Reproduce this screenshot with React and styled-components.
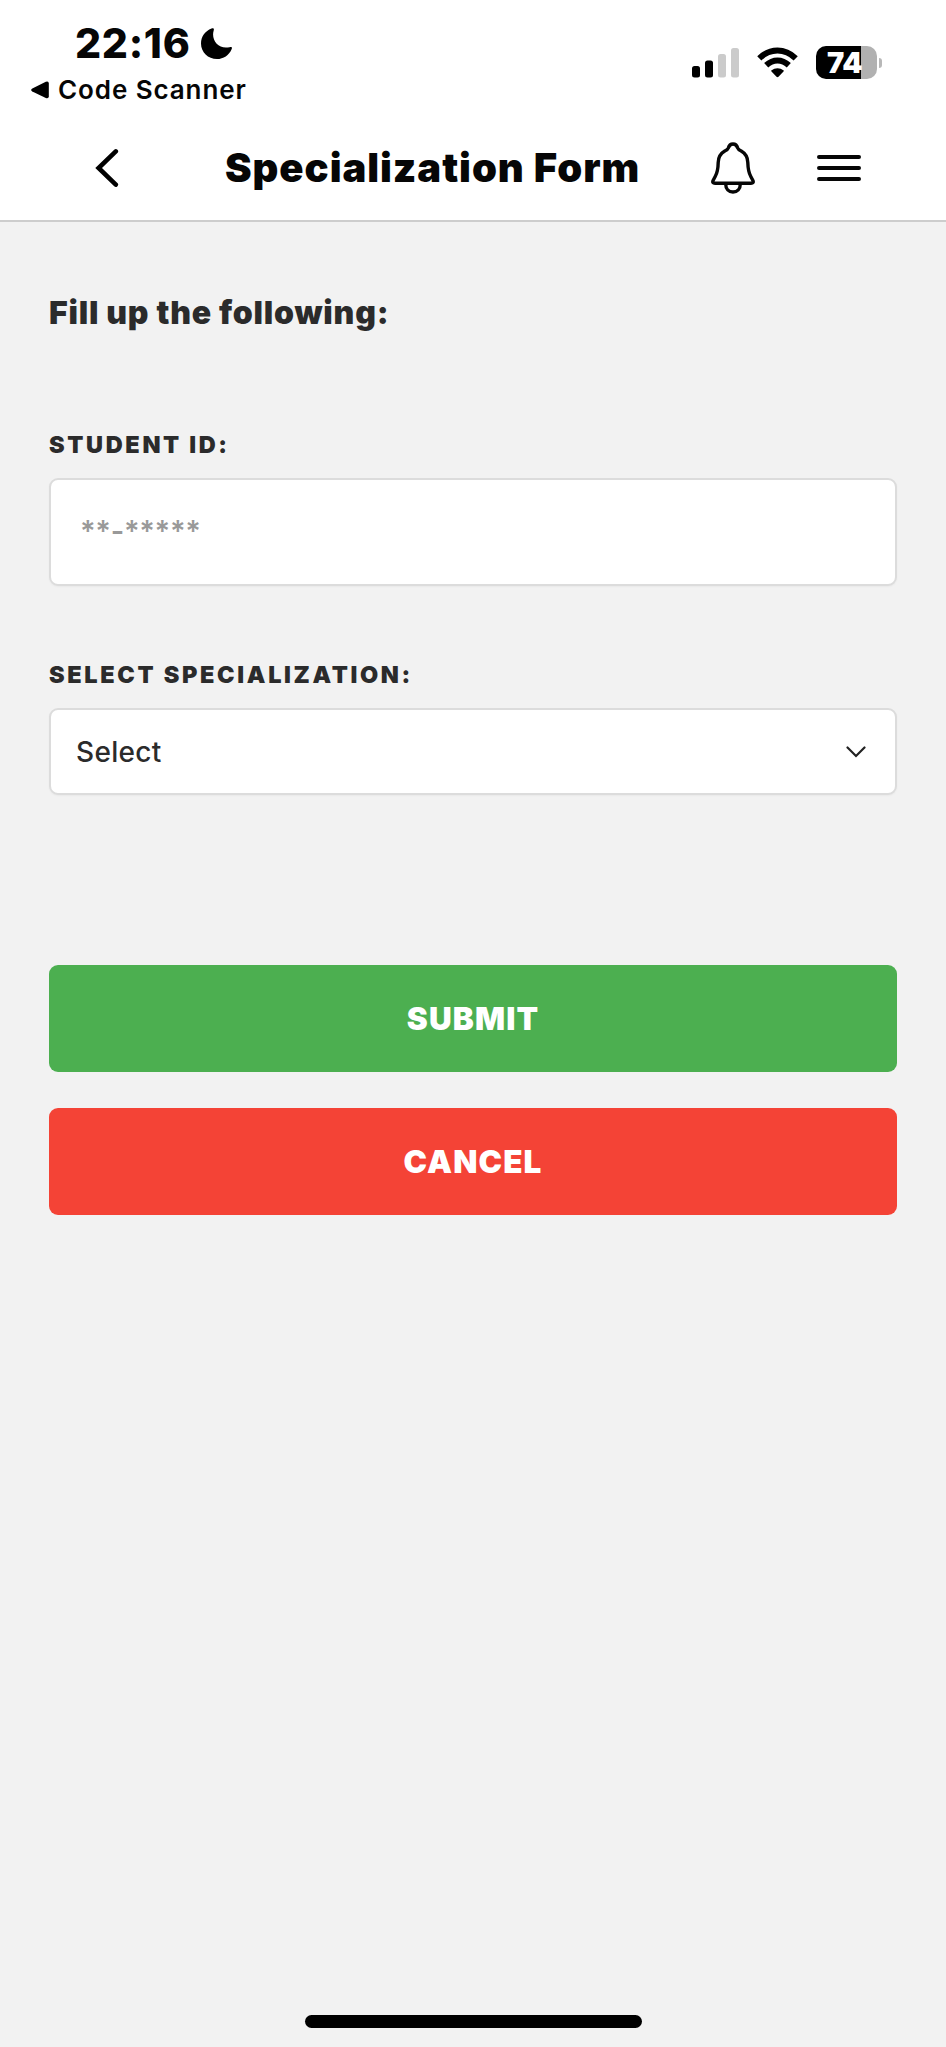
import React from "react";
import styled, { createGlobalStyle } from "styled-components";

const GlobalStyle = createGlobalStyle`
  * { box-sizing: border-box; }
  html, body { margin: 0; padding: 0; background: #f2f2f2; }
  body { font-family: Inter, "Liberation Sans", sans-serif; color: #2b2b2b; }
  svg { display: block; flex: none; }
`;

const Screen = styled.div`
  display: flex;
  flex-direction: column;
  width: 946px;
  height: 2047px;
  background: #f2f2f2;
  overflow: hidden;
`;

const Header = styled.header`
  height: 222px;
  background: #fff;
  border-bottom: 2px solid #cdcdcd;
  color: #060606;
`;

const StatusBar = styled.div`
  display: flex;
  justify-content: space-between;
  height: 117px;
  padding: 18px 64px 0 31px;
`;

const StatusLeft = styled.div`
  display: flex;
  flex-direction: column;
`;

const ClockRow = styled.div`
  display: flex;
  align-items: center;
  height: 51px;
  padding-left: 44px;
`;

const Clock = styled.span`
  width: 126px;
  font-size: 41px;
  font-weight: 800;
  line-height: 51px;
  letter-spacing: 0.7px;
  white-space: nowrap;
`;

const BackToApp = styled.div`
  display: flex;
  align-items: center;
  gap: 8px;
  height: 42px;
  font-size: 26px;
  font-weight: 600;
  line-height: 42px;
  letter-spacing: 0.9px;
  white-space: nowrap;
`;

const StatusRight = styled.div`
  display: flex;
  padding-top: 28px;
  gap: 17px;
`;

const Battery = styled.div`
  display: flex;
  align-items: center;
  gap: 2px;
  height: 33px;
  margin-left: 1px;
`;

const BatteryBody = styled.div`
  width: 61px;
  height: 33px;
  border-radius: 10px;
  background: linear-gradient(to right, #000 45px, #b1b1b1 45px);
  color: #fff;
  font-size: 29px;
  font-weight: 900;
  line-height: 34px;
  letter-spacing: -0.3px;
  text-align: left;
  padding-left: 11px;
`;

const BatteryTip = styled.div`
  width: 3px;
  height: 10px;
  border-radius: 0 3px 3px 0;
  background: #b8b8b8;
`;

const NavBar = styled.nav`
  display: flex;
  align-items: center;
  height: 101px;
  padding-left: 95px;
`;

const Title = styled.h1`
  width: 433px;
  margin: 0 0 0 106px;
  font-size: 40px;
  font-weight: 900;
  line-height: 50px;
  letter-spacing: 0.95px;
  white-space: nowrap;
`;

const NavIcons = styled.div`
  display: flex;
  align-items: center;
  margin-left: 53px;
  gap: 62px;
`;

const Form = styled.main`
  display: flex;
  flex-direction: column;
  flex: 1;
  padding: 71px 49px 0;
`;

const Heading = styled.h2`
  margin: 0 0 97px;
  font-size: 32px;
  font-weight: 900;
  line-height: 40px;
  letter-spacing: 0.77px;
`;

const Label = styled.label`
  font-size: 23.5px;
  font-weight: 900;
  line-height: 30px;
  letter-spacing: 2.65px;
  margin-bottom: 18px;
`;

const inputBox = `
  background: #fff;
  border: 2px solid #dcdcdc;
  border-radius: 9px;
  box-shadow: 0 1px 2px rgba(0, 0, 0, 0.04);
`;

const Input = styled.div`
  ${inputBox}
  height: 108px;
  margin-bottom: 74px;
  padding: 31px 0 0 29px;
  color: #999;
  font-size: 29px;
  font-weight: 600;
  line-height: 40px;
  letter-spacing: -0.3px;
`;

const Select = styled.div`
  ${inputBox}
  display: flex;
  align-items: center;
  justify-content: space-between;
  height: 87px;
  margin-bottom: 170px;
  padding: 0 29px 0 25px;
  font-size: 28px;
  font-weight: 500;
  letter-spacing: 0.3px;
`;

const Button = styled.button`
  height: 107px;
  margin: 0 0 36px;
  padding: 0;
  border: 0;
  border-radius: 9px;
  background: ${(p) => p.$color};
  color: #fff;
  font-family: inherit;
  font-size: 31.5px;
  font-weight: 900;
  line-height: 40px;
  letter-spacing: 1.1px;
`;

const HomeIndicator = styled.div`
  align-self: center;
  width: 337px;
  height: 13px;
  margin-bottom: 19px;
  border-radius: 7px;
  background: #000;
`;

const Moon = () => (
  <svg width="31" height="31" viewBox="0 0 31 31">
    <path d="M10.5 0.6C12.6 -0.2 13.3 0.5 12.7 2.4C9.8 12 17.5 21.8 28.5 19.2C30.8 18.7 31.4 19.4 30.6 21.2C28 27.2 22.5 31 16 31C7 31 0 24.2 0 15.5C0 8.8 4.2 3 10.5 0.6Z" fill="#000" />
  </svg>
);

const Triangle = () => (
  <svg width="19" height="18" viewBox="0 0 19 18">
    <path d="M1.3 7.6L14.8 0.8Q17.8 -0.3 17.8 2.6V15.2Q17.8 18 14.8 17L1.3 10.4Q-1 9 1.3 7.6Z" fill="#000" />
  </svg>
);

const Signal = () => (
  <svg width="48" height="33" viewBox="0 0 48 33">
    <rect x="0" y="20" width="8" height="11.5" rx="2.5" />
    <rect x="13" y="14.5" width="8" height="17" rx="2.5" />
    <rect x="26" y="8" width="8" height="23.5" rx="2.5" fill="#cbcbcb" />
    <rect x="39" y="2" width="8" height="29.5" rx="2.5" fill="#cbcbcb" />
  </svg>
);

const Wifi = () => (
  <svg width="41" height="33" viewBox="0 0 41 33">
    <g fill="none" stroke="#000" strokeWidth="6">
      <path d="M2.3 12.3Q10.5 4.5 20.5 4.5T38.7 12.3" />
      <path d="M9.2 19.3Q14.3 14.5 20.5 14.5T31.8 19.3" />
    </g>
    <path d="M14.2 24.4Q20.5 20.1 26.8 24.4Q27 25 26.5 25.5L21.5 30.8Q20.5 31.7 19.5 30.8L14.5 25.5Q14 25 14.2 24.4Z" />
  </svg>
);

const BackChevron = () => (
  <svg width="24" height="40" viewBox="0 0 24 40">
    <path d="M20.8 3.4L3.6 20L20.8 36.6" fill="none" stroke="#000" strokeWidth="4.6" strokeLinecap="round" strokeLinejoin="miter" />
  </svg>
);

const Bell = () => (
  <svg width="44" height="52" viewBox="0 0 44 52">
    <g fill="none" stroke="#060606" strokeWidth="3.4" strokeLinejoin="round">
      <path d="M22 2C19.5 2 18 3.5 17.3 6C16.8 7.5 15.5 8.2 13.8 9C9.5 11.5 7.3 15 7.2 20.5C7.1 27 6.5 30.5 4.2 34.5L2.1 38.5C1.3 40.2 2 41.2 4 41.2H40C42 41.2 42.7 40.2 41.9 38.5L39.8 34.5C37.5 30.5 37 27 36.8 20.5C36.7 15 34.5 11.5 30.2 9C28.5 8.2 27.2 7.5 26.7 6C26 3.5 24.5 2 22 2Z" />
      <path d="M14.7 42C14.7 47 17.7 50 22 50S29.3 47 29.3 42" />
    </g>
  </svg>
);

const Menu = () => (
  <svg width="44" height="28" viewBox="0 0 44 28">
    <path d="M2 3H42M2 14H42M2 25H42" stroke="#060606" strokeWidth="4" strokeLinecap="round" />
  </svg>
);

const DownChevron = () => (
  <svg width="20" height="12" viewBox="0 0 20 12">
    <path d="M1.5 1.5L10 10L18.5 1.5" fill="none" stroke="#222" strokeWidth="2.2" strokeLinecap="round" />
  </svg>
);

export default function App() {
  return (
    <>
      <GlobalStyle />
      <Screen>
        <Header>
          <StatusBar>
            <StatusLeft>
              <ClockRow>
                <Clock>22:16</Clock>
                <Moon />
              </ClockRow>
              <BackToApp>
                <Triangle />
                Code Scanner
              </BackToApp>
            </StatusLeft>
            <StatusRight>
              <Signal />
              <Wifi />
              <Battery>
                <BatteryBody>74</BatteryBody>
                <BatteryTip />
              </Battery>
            </StatusRight>
          </StatusBar>
          <NavBar>
            <BackChevron />
            <Title>Specialization Form</Title>
            <NavIcons>
              <Bell />
              <Menu />
            </NavIcons>
          </NavBar>
        </Header>
        <Form>
          <Heading>Fill up the following:</Heading>
          <Label>STUDENT ID:</Label>
          <Input>**-*****</Input>
          <Label>SELECT SPECIALIZATION:</Label>
          <Select>
            Select
            <DownChevron />
          </Select>
          <Button $color="#4caf50">SUBMIT</Button>
          <Button $color="#f44336">CANCEL</Button>
        </Form>
        <HomeIndicator />
      </Screen>
    </>
  );
}
